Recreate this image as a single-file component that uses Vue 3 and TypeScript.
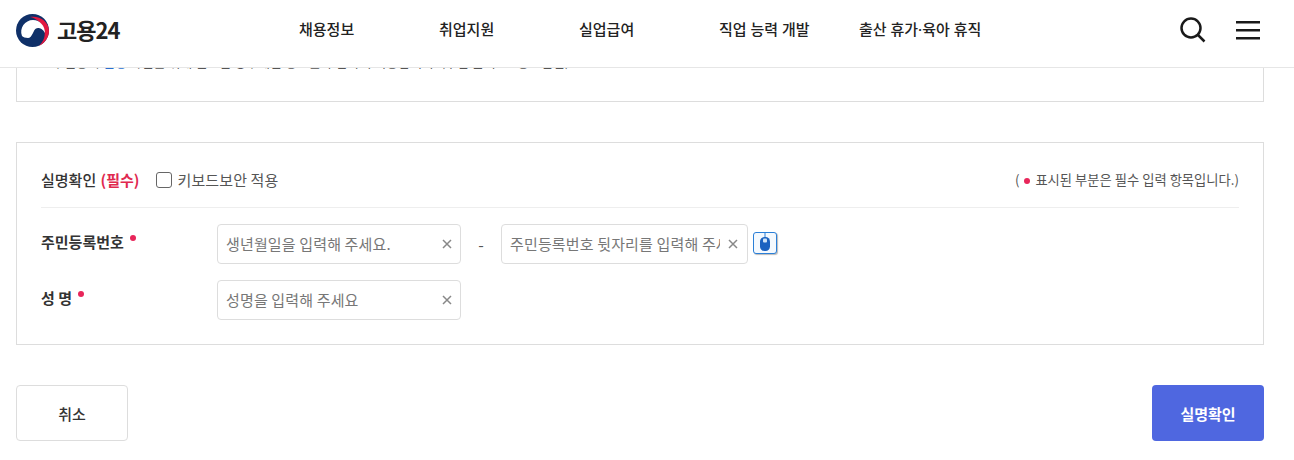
<script setup lang="ts">
const menus = ['채용정보', '취업지원', '실업급여', '직업 능력 개발', '출산 휴가·육아 휴직']
</script>

<template>
  <div class="page">
    <div class="notice">
      <p class="notice-text">주민등록 <span class="link">실명</span> 확인을 위해 필요한 경우에만 정보를 수집하여 이용합니다. (수집 근거 : 고용보험법)</p>
    </div>

    <section class="card">
      <div class="card-head">
        <div class="head-left">
          <strong class="title">실명확인 <em>(필수)</em></strong>
          <label class="check"><span class="box"></span>키보드보안 적용</label>
        </div>
        <p class="req-note">( <i class="dot"></i> 표시된 부분은 필수 입력 항목입니다.)</p>
      </div>

      <div class="row">
        <div class="label">주민등록번호<i class="dot up"></i></div>
        <div class="field">
          <span class="ph">생년월일을 입력해 주세요.</span>
          <svg class="clear" width="10" height="10" viewBox="0 0 10 10"><path d="M1 1l8 8M9 1l-8 8" /></svg>
        </div>
        <span class="dash">-</span>
        <div class="field back">
          <span class="ph">주민등록번호 뒷자리를 입력해 주세요.</span>
          <svg class="clear" width="10" height="10" viewBox="0 0 10 10"><path d="M1 1l8 8M9 1l-8 8" /></svg>
        </div>
        <button class="mouse" type="button" aria-label="마우스 입력기">
          <svg width="22" height="20" viewBox="0 0 22 20">
            <path d="M11 0v4" stroke="#2a7fd8" fill="none" />
            <rect x="6" y="4" width="10" height="14" rx="4.500" fill="#1b62c0" />
            <rect x="9" y="5.500" width="4" height="4" rx="1" fill="#cfe3f7" />
          </svg>
        </button>
      </div>

      <div class="row">
        <div class="label">성 명<i class="dot up"></i></div>
        <div class="field">
          <span class="ph">성명을 입력해 주세요</span>
          <svg class="clear" width="10" height="10" viewBox="0 0 10 10"><path d="M1 1l8 8M9 1l-8 8" /></svg>
        </div>
      </div>
    </section>

    <div class="actions">
      <button class="btn cancel" type="button">취소</button>
      <button class="btn confirm" type="button">실명확인</button>
    </div>

    <header class="top">
      <div class="logo">
        <svg width="33" height="33" viewBox="0 0 33 33">
          <circle cx="16.500" cy="16.500" r="16.500" fill="#0f3068" />
          <path d="M14 3C24 1.500 33 8 33 17 33 23 29 29 23 32 28 27 30 21 28 15 26 9 20 4 14 3z" fill="#e2173f" />
          <path d="M6 22C3 14 9 6 17 6c7 0 12 6 12 13-2-4-5-5-7-5-3 0-4 3-5 5-1.500 3-3 5-5 5-2.500 0-5-1-6-2z" fill="#fff" />
        </svg>
        <span class="logo-text">고용24</span>
      </div>
      <nav class="nav">
        <a v-for="m in menus" :key="m" class="nav-item">{{ m }}</a>
      </nav>
      <div class="tools">
        <svg width="26" height="26" viewBox="0 0 26 26" fill="none" stroke="#1a1a1a" stroke-width="2.500">
          <circle cx="11" cy="11" r="9.500" />
          <path d="M18 18l6.500 6.500" />
        </svg>
        <svg width="24" height="19" viewBox="0 0 24 19" stroke="#1a1a1a" stroke-width="2.500">
          <path d="M0 1.250h24M0 9.250h24M0 17.250h24" />
        </svg>
      </div>
    </header>
  </div>
</template>

<style scoped>
.page {
  position: relative;
  width: 1294px;
  height: 460px;
  overflow: hidden;
  background: #fff;
  padding: 0 30px 0 16px;
  box-sizing: border-box;
  font-family: "Noto Sans CJK KR", "Noto Sans", sans-serif;
  color: #222;
}

.notice {
  height: 102px;
  border: 1px solid #ddd;
  border-top: 0;
  box-sizing: border-box;
  padding: 52px 0 0 35px;
}

.notice-text {
  margin: 0;
  font-size: 13px;
  line-height: 20px;
  color: #555;
}

.link {
  color: #2a6fd0;
}

.card {
  margin-top: 40px;
  height: 203px;
  border: 1px solid #ddd;
  box-sizing: border-box;
  padding: 0 24px;
}

.card-head {
  height: 65px;
  box-sizing: border-box;
  padding-top: 9px;
  border-bottom: 1px solid #eee;
  display: flex;
  align-items: center;
  justify-content: space-between;
}

.head-left {
  display: flex;
  align-items: center;
  gap: 16px;
}

.title {
  font-size: 15px;
  font-weight: 500;
  color: #333;
}

.title em {
  font-style: normal;
  font-weight: 700;
  margin-left: 1px;
  color: #e0294f;
}

.check {
  display: flex;
  align-items: center;
  gap: 6px;
  font-size: 15px;
  letter-spacing: 0.1px;
  color: #555;
}

.box {
  width: 16px;
  height: 16px;
  box-sizing: border-box;
  border: 1px solid #666;
  border-radius: 3px;
  background: #fff;
}

.req-note {
  margin: 0;
  font-size: 13.300px;
  color: #555;
}

.dot {
  display: inline-block;
  width: 6px;
  height: 6px;
  margin: 0 2px;
  border-radius: 50%;
  background: #e8265a;
  vertical-align: middle;
}

.dot.up {
  margin: 0 0 13px 6px;
}

.row {
  display: flex;
  align-items: center;
  margin-top: 16px;
}

.label {
  width: 176px;
  padding-bottom: 3px;
  font-size: 15px;
  font-weight: 700;
  color: #333;
}

.field {
  width: 244px;
  height: 40px;
  box-sizing: border-box;
  border: 1px solid #ddd;
  border-radius: 4px;
  padding: 0 8px;
  display: flex;
  align-items: center;
  justify-content: space-between;
}

.field.back {
  width: 247px;
  padding-right: 9px;
}

.ph {
  padding-bottom: 1px;
  font-size: 15px;
  letter-spacing: 0.15px;
  color: #777;
  white-space: nowrap;
  overflow: hidden;
  width: 210px;
}

.clear {
  fill: none;
  stroke: #888;
  stroke-width: 1.500;
}

.dash {
  width: 40px;
  text-align: center;
  font-size: 16px;
  color: #555;
}

.mouse {
  width: 24px;
  height: 22px;
  margin: -2px 0 0 5px;
  padding: 0;
  border: 1px solid #2a7fd8;
  border-radius: 3px;
  background: #f4f9fe;
  box-shadow: 1px 1px 1px #bbb;
  display: flex;
  align-items: center;
  justify-content: center;
}

.actions {
  margin-top: 40px;
  display: flex;
  justify-content: space-between;
}

.btn {
  width: 112px;
  height: 56px;
  border-radius: 4px;
  font-family: inherit;
  font-size: 15px;
  font-weight: 500;
}

.cancel {
  background: #fff;
  border: 1px solid #ddd;
  color: #333;
}

.confirm {
  background: #4f67e0;
  border: 0;
  font-weight: 700;
  color: #fff;
}

.top {
  position: absolute;
  top: 0;
  left: 0;
  width: 1294px;
  height: 68px;
  box-sizing: border-box;
  padding: 0 34px 7px 16px;
  background: #fff;
  border-bottom: 1px solid #e6e6e6;
  display: flex;
  align-items: center;
}

.logo {
  display: flex;
  align-items: center;
  gap: 8px;
  width: 283px;
}

.logo-text {
  padding-bottom: 3px;
  font-size: 22px;
  font-weight: 700;
  letter-spacing: -1px;
  color: #222;
}

.nav {
  display: flex;
  flex: 1;
  padding-bottom: 4px;
}

.nav-item {
  width: 140px;
  font-family: "Noto Sans", "Noto Sans CJK KR", sans-serif;
  font-size: 15px;
  font-weight: 500;
  white-space: nowrap;
  color: #222;
}

.tools {
  display: flex;
  align-items: center;
  gap: 30px;
}
</style>

<style>
html,
body {
  margin: 0;
  background: #fff;
}
</style>
